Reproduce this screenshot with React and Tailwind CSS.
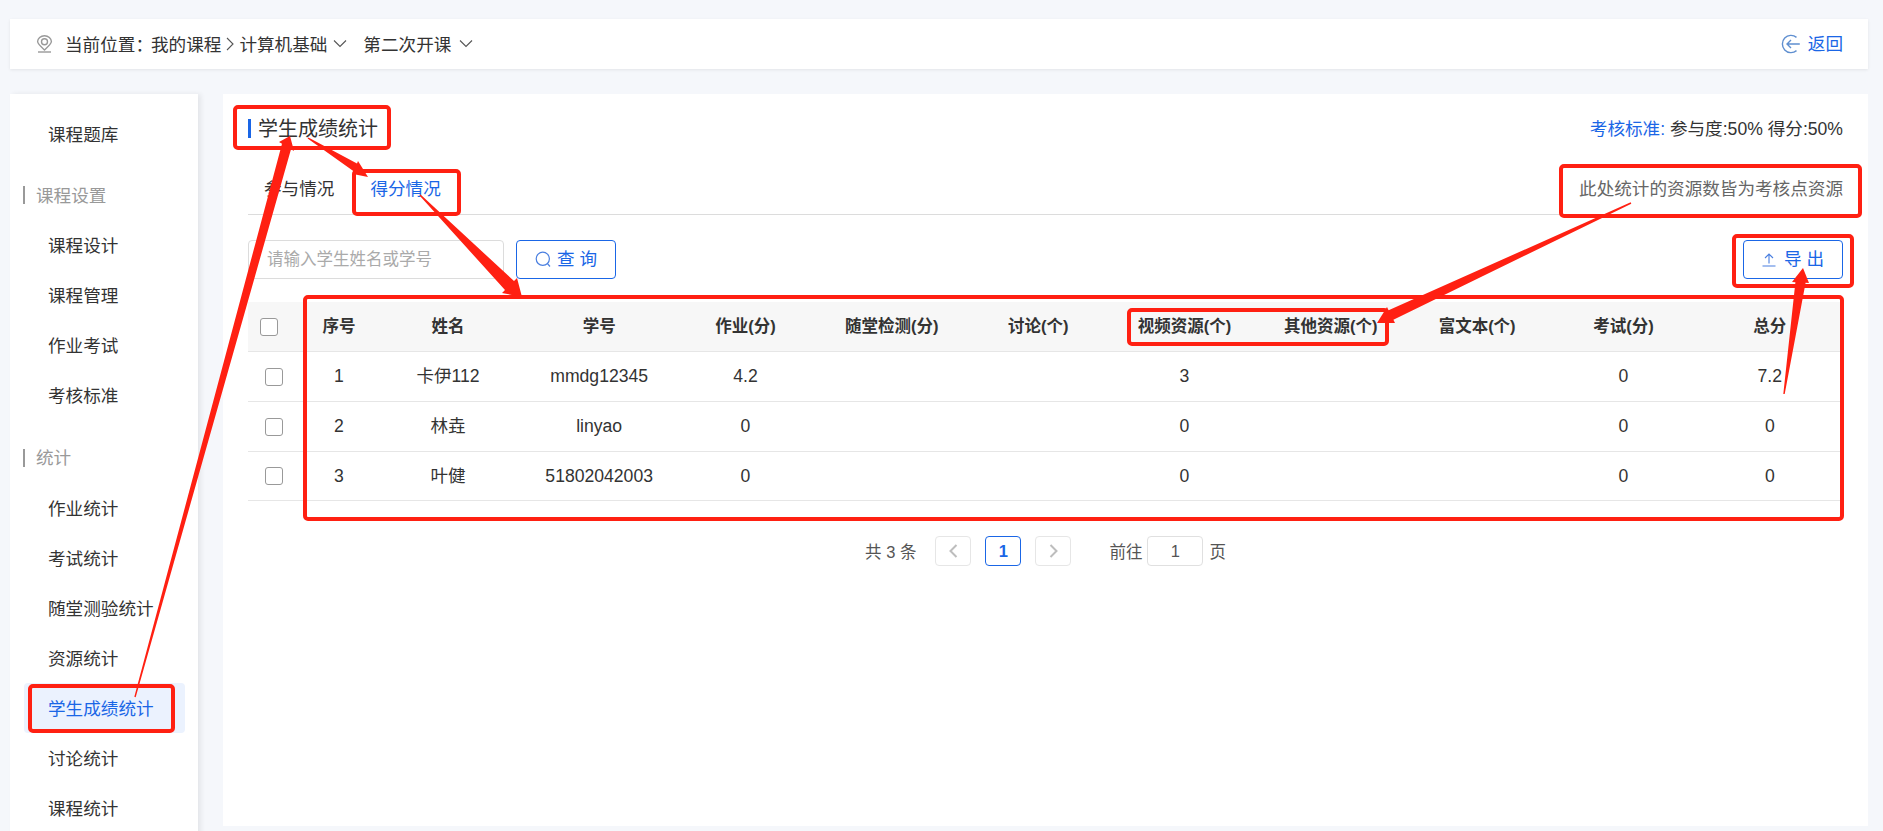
const menuA = ["课程设计", "课程管理", "作业考试", "考核标准"];
const menuB = ["作业统计", "考试统计", "随堂测验统计", "资源统计", "学生成绩统计", "讨论统计", "课程统计"];
const cols = ["序号", "姓名", "学号", "作业(分)", "随堂检测(分)", "讨论(个)", "视频资源(个)", "其他资源(个)", "富文本(个)", "考试(分)", "总分"];
const rows = [
  ["1", "卡伊112", "mmdg12345", "4.2", "", "", "3", "", "", "0", "7.2"],
  ["2", "林垚", "linyao", "0", "", "", "0", "", "", "0", "0"],
  ["3", "叶健", "51802042003", "0", "", "", "0", "", "", "0", "0"],
];

function Chevron({ className }) {
  return (
    <svg className={className} width="14" height="9" viewBox="0 0 14 9" fill="none" stroke="#555" strokeWidth="1.1">
      <path d="M1 1.5 L7 7.5 L13 1.5" />
    </svg>
  );
}

function Check() {
  return <span className="block w-[18px] h-[18px] rounded-[3px] border border-[#999] bg-white" />;
}

function MenuItem({ label, active }) {
  return (
    <div
      className={
        "ml-[14px] w-[161px] h-[50px] pl-[24px] pt-[2px] flex items-center rounded-[4px] whitespace-nowrap " +
        (active ? "bg-[#ebf2fe] text-[#1a66e6]" : "text-[#333]")
      }
    >
      {label}
    </div>
  );
}

function Section({ label, className, labelClass }) {
  return (
    <div className={"h-[50px] pl-[13px] flex items-center gap-[11px] text-[#999] " + className}>
      <span className="w-[2px] h-[18px] bg-[#999]" />
      <span className={labelClass}>{label}</span>
    </div>
  );
}

const RED = "#ff2012";

function Box({ x1, y1, x2, y2 }) {
  return (
    <rect x={x1 + 2} y={y1 + 2} width={x2 - x1 - 4} height={y2 - y1 - 4} rx="3" fill="none" stroke={RED} strokeWidth="4" />
  );
}

function Arrow({ tail, tip, a, b }) {
  const lerp = (p, q, t) => [p[0] + (q[0] - p[0]) * t, p[1] + (q[1] - p[1]) * t];
  const n1 = lerp(a, b, 0.2);
  const n2 = lerp(a, b, 0.8);
  const dx = tip[0] - tail[0];
  const dy = tip[1] - tail[1];
  const len = Math.hypot(dx, dy);
  const ox = (-dy / len) * 0.7;
  const oy = (dx / len) * 0.7;
  const t1 = [tail[0] - ox, tail[1] - oy];
  const t2 = [tail[0] + ox, tail[1] + oy];
  const d1 = (n1[0] - t1[0]) ** 2 + (n1[1] - t1[1]) ** 2;
  const d2 = (n1[0] - t2[0]) ** 2 + (n1[1] - t2[1]) ** 2;
  const [s1, s2] = d1 < d2 ? [t1, t2] : [t2, t1];
  const pts = [s2, s1, n1, a, tip, b, n2].map((p) => p.join(",")).join(" ");
  return <polygon points={pts} fill={RED} />;
}

export default function App() {
  return (
    <div className="relative w-[1883px] h-[831px] overflow-hidden bg-[#f5f7fb] text-[17.6px] text-[#333] font-['Liberation_Sans','Noto_Sans_CJK_SC',sans-serif]">
      <div className="pt-[19px] pl-[10px] pr-[15px]">
        <header className="h-[50px] bg-white shadow-[0_1px_3px_rgba(0,0,0,0.08)] pl-[26px] pr-[25px] flex items-center justify-between">
          <div className="flex items-center">
            <svg width="17" height="18" viewBox="0 0 17 18" fill="none" stroke="#999" strokeWidth="1.4">
              <path d="M8.5 15 C4.5 11.4 1.6 8.8 1.6 6.6 A6.9 5.9 0 0 1 15.4 6.6 C15.4 8.8 12.5 11.4 8.5 15 Z" />
              <circle cx="8.5" cy="6.8" r="3" />
              <path d="M2 17 H15" />
            </svg>
            <span className="ml-[12px] pt-[2px]">当前位置：</span>
            <span className="ml-[-2px] pt-[2px]">我的课程</span>
            <svg className="ml-[5px] mr-[5px]" width="8" height="14" viewBox="0 0 8 14" fill="none" stroke="#555" strokeWidth="1.1">
              <path d="M1 1 L7 7 L1 13" />
            </svg>
            <span className="pt-[2px]">计算机基础</span>
            <Chevron className="ml-[6px]" />
            <span className="ml-[16px] pt-[2px]">第二次开课</span>
            <Chevron className="ml-[8px]" />
          </div>
          <div className="flex items-center gap-[7px] text-[#1a66e6]">
            <svg width="20" height="20" viewBox="0 0 20 20" fill="none" stroke="#5f8fd0" strokeWidth="1.4">
              <path d="M15.5 3.4 A8.6 8.6 0 1 0 15.5 16.6" />
              <path d="M18.8 10 H6 M10 6 L6 10 L10 14" />
            </svg>
            <span className="pt-[1px]">返回</span>
          </div>
        </header>

        <div className="flex gap-[25px] mt-[25px]">
          <aside className="w-[188px] h-[760px] shrink-0 bg-white shadow-[3px_0_5px_rgba(0,0,0,0.07)] pt-[15px]">
            <MenuItem label="课程题库" />
            <Section label="课程设置" className="mt-[11px]" labelClass="pt-[2px]" />
            {menuA.map((m) => (
              <MenuItem key={m} label={m} />
            ))}
            <Section label="统计" className="mt-[13px]" labelClass="" />
            {menuB.map((m) => (
              <MenuItem key={m} label={m} active={m === "学生成绩统计"} />
            ))}
          </aside>

          <main className="flex-1 h-[732px] bg-white px-[25px] pt-[19px]">
            <div className="h-[30px] flex items-center justify-between">
              <h1 className="flex items-center gap-[7px] text-[20px] font-normal">
                <span className="w-[3px] h-[19px] bg-[#1a66e6]" />
                <span className="pt-[2px]">学生成绩统计</span>
              </h1>
              <div className="pt-[2px]">
                <span className="text-[#1a66e6]">考核标准:</span> 参与度:50% 得分:50%
              </div>
            </div>

            <div className="mt-[22px] h-[50px] pb-[1px] border-b border-[#dcdcdc] pl-[16px] flex items-center gap-[36px]">
              <span>参与情况</span>
              <span className="text-[#1a66e6]">得分情况</span>
              <span className="ml-auto text-[#666]">此处统计的资源数皆为考核点资源</span>
            </div>

            <div className="mt-[25px] h-[39px] flex items-center">
              <input
                readOnly
                placeholder="请输入学生姓名或学号"
                className="w-[256px] h-[39px] rounded-[4px] border border-[#dcdcdc] pl-[18px] text-[16.5px] outline-none placeholder:text-[#aaa]"
              />
              <button className="ml-[12px] w-[100px] h-[39px] rounded-[4px] border border-[#1a66e6] text-[#1a66e6] flex items-center justify-center gap-[6px]">
                <svg width="16" height="17" viewBox="0 0 16 17" fill="none" stroke="#4a7fe0" strokeWidth="1.2">
                  <circle cx="7.8" cy="7.8" r="6.6" />
                  <path d="M12.5 12.6 L15 15.5" />
                </svg>
                查 询
              </button>
              <button className="ml-auto w-[100px] h-[39px] rounded-[4px] border border-[#1a66e6] text-[#1a66e6] flex items-center justify-center gap-[8px]">
                <svg width="14" height="14" viewBox="0 0 14 14" fill="none" stroke="#4a7fe0" strokeWidth="1.1">
                  <path d="M0.5 13 H13.5 M7 10.5 V1 M3 5 L7 1 L11 5" />
                </svg>
                导 出
              </button>
            </div>

            <table className="mt-[23px] w-full table-fixed border-separate border-spacing-0 text-center">
              <colgroup>
                <col className="w-[60px]" />
                <col className="w-[62px]" />
                <col className="w-[156px]" />
                {Array.from({ length: 9 }).map((_, i) => (
                  <col key={i} className="w-[146.33px]" />
                ))}
              </colgroup>
              <thead>
                <tr className="h-[50px] bg-[#f7f7f7]">
                  <th className="pl-[12px] border-b border-[#e6e6e6]">
                    <Check />
                  </th>
                  {cols.map((c) => (
                    <th key={c} className="text-[16.5px] font-bold border-b border-[#e6e6e6] whitespace-nowrap">
                      {c}
                    </th>
                  ))}
                </tr>
              </thead>
              <tbody>
                {rows.map((r, i) => (
                  <tr key={i} className={i === 2 ? "h-[49px]" : "h-[50px]"}>
                    <td className="pl-[17px] border-b border-[#e6e6e6]">
                      <Check />
                    </td>
                    {r.map((v, j) => (
                      <td key={j} className="border-b border-[#e6e6e6]">
                        {v}
                      </td>
                    ))}
                  </tr>
                ))}
              </tbody>
            </table>

            <div className="mt-[35px] flex items-center justify-center text-[16.5px] text-[#555]">
              <span className="pt-[2px]">共 3 条</span>
              <span className="ml-[19px] w-[36px] h-[30px] rounded-[4px] border border-[#e6e6e6] flex items-center justify-center">
                <svg width="9" height="14" viewBox="0 0 9 14" fill="none" stroke="#bdbdbd" strokeWidth="2">
                  <path d="M7.5 1 L1.5 7 L7.5 13" />
                </svg>
              </span>
              <span className="ml-[14px] w-[36px] h-[30px] rounded-[4px] border border-[#1a66e6] text-[#1a66e6] font-bold flex items-center justify-center">
                1
              </span>
              <span className="ml-[14px] w-[36px] h-[30px] rounded-[4px] border border-[#e6e6e6] flex items-center justify-center">
                <svg width="9" height="14" viewBox="0 0 9 14" fill="none" stroke="#bdbdbd" strokeWidth="2">
                  <path d="M1.5 1 L7.5 7 L1.5 13" />
                </svg>
              </span>
              <span className="ml-[38px] pt-[2px]">前往</span>
              <span className="ml-[5px] w-[56px] h-[30px] rounded-[4px] border border-[#e0e0e0] flex items-center justify-center">1</span>
              <span className="ml-[6px] pt-[2px]">页</span>
            </div>
          </main>
        </div>
      </div>

      <svg className="absolute left-0 top-0 pointer-events-none" width="1883" height="831" viewBox="0 0 1883 831">
        <Box x1={233} y1={105} x2={391} y2={150} />
        <Box x1={352} y1={169} x2={461} y2={216} />
        <Box x1={1559} y1={164} x2={1862} y2={218} />
        <Box x1={1732} y1={234} x2={1854} y2={288} />
        <Box x1={303} y1={295} x2={1844} y2={521} />
        <Box x1={1127} y1={308} x2={1389} y2={346} />
        <Box x1={28} y1={684} x2={175} y2={733} />
        <Arrow tail={[135, 697]} tip={[290, 136]} a={[279, 142]} b={[294, 151]} />
        <Arrow tail={[308, 138]} tip={[368, 177]} a={[358, 161]} b={[353, 174]} />
        <Arrow tail={[420, 195]} tip={[522, 297]} a={[517, 278]} b={[502, 293]} />
        <Arrow tail={[1631, 203]} tip={[1377, 323]} a={[1387, 307]} b={[1395, 323]} />
        <Arrow tail={[1784, 394]} tip={[1803, 268]} a={[1792, 282]} b={[1809, 283]} />
      </svg>
    </div>
  );
}
